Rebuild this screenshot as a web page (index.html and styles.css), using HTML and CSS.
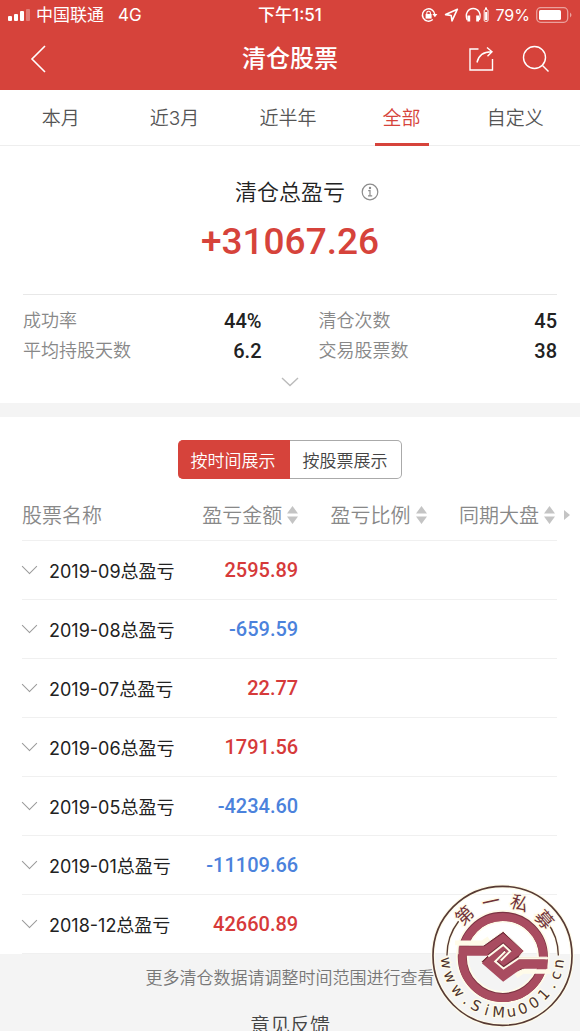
FILE: index.html
```html
<!DOCTYPE html>
<html lang="zh-CN">
<head>
<meta charset="utf-8">
<meta name="viewport" content="width=device-width, initial-scale=1">
<title>清仓股票</title>
<link rel="stylesheet" href="styles.css">
</head>
<body>
<div class="app">
  <header class="top">
    <div class="status">
      <div class="status-side">
        <svg class="signal" width="22" height="12" viewBox="0 0 22 12" fill="#fff"><rect x="0" y="7" width="4" height="5" rx="1"/><rect x="6" y="5" width="4" height="7" rx="1"/><rect x="12" y="2" width="4" height="10" rx="1"/><rect x="18" y="0" width="4" height="12" rx="1" opacity=".3"/></svg>
        <span>中国联通</span><span class="network">4G</span>
      </div>
      <time class="clock">下午1:51</time>
      <div class="status-side status-right">
        <svg width="17" height="16" viewBox="0 0 17 16" fill="none" stroke="#fff" stroke-width="1.4"><path d="M11.8 12.6A6.2 6.2 0 1 1 13.8 7.4"/><path d="M11.4 7h5l-2.5 3.2z" fill="#fff" stroke="none"/><rect x="4.6" y="7" width="6" height="4.6" fill="#fff" stroke="none"/><path d="M5.8 7.4V6a1.8 1.8 0 0 1 3.6 0v1.4" stroke-width="1.1"/></svg>
        <svg width="15" height="16" viewBox="0 0 15 16" fill="none" stroke="#fff" stroke-width="1.6" stroke-linejoin="round"><path d="M13.4 2.2 1.6 7.6l5.6.9.8 5.4z"/></svg>
        <svg width="24" height="16" viewBox="0 0 24 16" fill="none" stroke="#fff" stroke-width="1.4"><path d="M2.2 13C-.4 6.600 3.200 1.500 8.200 1.500S16.800 6.600 14.200 13"/><path d="M3.800 8.500v6M12.600 8.500v6" stroke-width="2.800"/><rect x="19.200" y="2.700" width="3.800" height="11.600" rx="1" stroke-width="1"/><path d="M20 1.500h2M21.100 5v8" stroke-width="2"/></svg>
        <span class="charge">79%</span>
        <svg width="36" height="16" viewBox="0 0 36 16"><rect x=".7" y=".7" width="31" height="14.600" rx="4" fill="none" stroke="#fff" stroke-opacity=".5" stroke-width="1.300"/><rect x="3" y="3" width="22" height="10" rx="1.500" fill="#fff"/><path d="M34 5.500q3 2.500 0 5z" fill="#fff" opacity=".5"/></svg>
      </div>
    </div>
    <div class="nav">
      <button class="icon-button back" aria-label="返回"><svg width="16" height="28" viewBox="0 0 16 28"><path d="M15 1 2 14l13 13" fill="none" stroke="#fff" stroke-width="1.600"/></svg></button>
      <h1>清仓股票</h1>
      <div class="nav-actions">
        <button class="icon-button" aria-label="分享"><svg width="26" height="26" viewBox="0 0 26 26" fill="none" stroke="#fff" stroke-width="1.400"><path d="M10.500 3H2v21h22.500V13M9 16.500C10.500 9.500 15 5.800 23.500 5.800M19 1.500l5 4.300-4.500 4.500"/></svg></button>
        <button class="icon-button" aria-label="搜索"><svg width="28" height="28" viewBox="0 0 28 28" fill="none" stroke="#fff" stroke-width="1.400"><circle cx="12.500" cy="12.500" r="11"/><path d="m20.500 20.500 6 6"/></svg></button>
      </div>
    </div>
  </header>

  <nav class="tabs">
    <button>本月</button><button>近3月</button><button>近半年</button><button class="active">全部</button><button>自定义</button>
  </nav>

  <main>
    <section class="summary">
      <div class="total">
        <h2>清仓总盈亏</h2>
        <button class="icon-button info" aria-label="说明"><svg width="18" height="18" viewBox="0 0 18 18" fill="none" stroke="#8c8c8c" stroke-width="1.200"><circle cx="9" cy="9" r="7.800"/><path d="M7.200 7.600H9v5M7 12.900h4.200"/><circle cx="9" cy="5" r=".6" fill="#8c8c8c"/></svg></button>
        <strong>+31067.26</strong>
      </div>
      <dl class="stats">
        <div><dt>成功率</dt><dd>44%</dd></div>
        <div><dt>清仓次数</dt><dd>45</dd></div>
        <div><dt>平均持股天数</dt><dd>6.2</dd></div>
        <div><dt>交易股票数</dt><dd>38</dd></div>
      </dl>
      <button class="icon-button more" aria-label="展开"><svg width="18" height="10" viewBox="0 0 18 10"><path d="m1 1 8 7.500L17 1" fill="none" stroke="#bbb" stroke-width="1.400"/></svg></button>
    </section>

    <section class="records">
      <div class="switch"><button class="active">按时间展示</button><button>按股票展示</button></div>
      <div class="table-wrap">
        <table>
          <colgroup><col class="col-name"><col class="col-amount"><col class="col-ratio"><col></colgroup>
          <thead>
            <tr>
              <th>股票名称</th>
              <th><button class="sort">盈亏金额<svg width="11" height="18" viewBox="0 0 11 18" fill="#c4c4c4"><path d="M5.500 0 11 7.500H0zM0 10.500h11L5.500 18z"/></svg></button></th>
              <th><button class="sort">盈亏比例<svg width="11" height="18" viewBox="0 0 11 18" fill="#c4c4c4"><path d="M5.500 0 11 7.500H0zM0 10.500h11L5.500 18z"/></svg></button></th>
              <th><button class="sort">同期大盘<svg width="11" height="18" viewBox="0 0 11 18" fill="#c4c4c4"><path d="M5.500 0 11 7.500H0zM0 10.500h11L5.500 18z"/></svg></button></th>
            </tr>
          </thead>
          <tbody>
            <tr><td><button class="month">2019-09总盈亏</button></td><td class="gain">2595.89</td><td></td><td></td></tr>
            <tr><td><button class="month">2019-08总盈亏</button></td><td class="loss">-659.59</td><td></td><td></td></tr>
            <tr><td><button class="month">2019-07总盈亏</button></td><td class="gain">22.77</td><td></td><td></td></tr>
            <tr><td><button class="month">2019-06总盈亏</button></td><td class="gain">1791.56</td><td></td><td></td></tr>
            <tr><td><button class="month">2019-05总盈亏</button></td><td class="loss">-4234.60</td><td></td><td></td></tr>
            <tr><td><button class="month">2019-01总盈亏</button></td><td class="loss">-11109.66</td><td></td><td></td></tr>
            <tr><td><button class="month">2018-12总盈亏</button></td><td class="gain">42660.89</td><td></td><td></td></tr>
          </tbody>
        </table>
        <svg class="scroll-hint" width="6" height="10" viewBox="0 0 6 10"><path d="M0 0l6 5-6 5z" fill="#c4c4c4"/></svg>
      </div>
    </section>

    <footer>
      <p>更多清仓数据请调整时间范围进行查看</p>
      <button class="feedback">意见反馈</button>
    </footer>
  </main>

  <svg class="seal" viewBox="20 10 430 430" role="img" aria-label="第一私募 www.SiMu001.cn">
    <circle class="halo" cx="235" cy="226" r="209"/>
    <circle class="rim" cx="235" cy="226" r="209"/>
    <path class="arc-halo" d="M68 225A168 168 0 0 1 103 122M403 225A168 168 0 0 0 367 122"/>
    <path class="arc" d="M68 225A168 168 0 0 1 103 122M403 225A168 168 0 0 0 367 122"/>
    <circle class="ring-halo" cx="236" cy="229" r="122"/>
    <circle class="ring-shade" cx="236" cy="229" r="122"/>
    <circle class="ring" cx="236" cy="231" r="122"/>
    <path class="gap" d="M92 187H174L194 174M380 273H296L276 287"/>
    <path class="shade" d="M104 194H178L237 152L299 211L284 230H370V236L237 292L170 244L194 221H104z"/>
    <path class="body" d="M104 197H181L237 158L298 212L270 236H370V265H291L237 304L173 248L196 226H104z"/>
    <path class="hook-shade" d="M192 224 237 189 260 210 232 238M284 228 238 260 215 241 243 210"/>
    <path class="hook" d="M192 228 237 193 258 212 230 240M370 233H284L238 264 213 243 243 213"/>
    <g class="cn">
      <text transform="rotate(-43 235 226)" x="235" y="79">第</text>
      <text transform="rotate(-12 235 226)" x="235" y="79">一</text>
      <text transform="rotate(18 235 226)" x="235" y="79">私</text>
      <text transform="rotate(49 235 226)" x="235" y="79">募</text>
    </g>
    <g class="url">
      <text transform="rotate(83 235 226)" x="235" y="411">w</text>
      <text transform="rotate(68 235 226)" x="235" y="411">w</text>
      <text transform="rotate(52 235 226)" x="235" y="411">w</text>
      <text transform="rotate(39 235 226)" x="235" y="411">.</text>
      <text transform="rotate(28 235 226)" x="235" y="411">S</text>
      <text transform="rotate(16 235 226)" x="235" y="411">i</text>
      <text transform="rotate(4 235 226)" x="235" y="411">M</text>
      <text transform="rotate(-9 235 226)" x="235" y="411">u</text>
      <text transform="rotate(-21 235 226)" x="235" y="411">0</text>
      <text transform="rotate(-34 235 226)" x="235" y="411">0</text>
      <text transform="rotate(-47 235 226)" x="235" y="411">1</text>
      <text transform="rotate(-59 235 226)" x="235" y="411">.</text>
      <text transform="rotate(-70 235 226)" x="235" y="411">c</text>
      <text transform="rotate(-82 235 226)" x="235" y="411">n</text>
    </g>
  </svg>
</div>
</body>
</html>
```

FILE: styles.css
```css
* { box-sizing: border-box; }
body { margin: 0; background: #f4f4f4; color: #222; font-family: Inter, "Noto Sans CJK SC", sans-serif; font-weight: 350; }
button { padding: 0; border: 0; background: none; color: inherit; font: inherit; white-space: nowrap; cursor: pointer; }
h1, h2, p, dl, dd { margin: 0; }
svg { display: block; flex: none; }

.app { position: relative; display: flex; flex-direction: column; height: 100vh; overflow: hidden; }
.top { flex: none; background: #d6433b; color: #fff; }

.status { display: flex; align-items: center; height: 30px; padding: 0 8px; font-size: 17px; font-weight: 400; line-height: 30px; }
.status-side { display: flex; flex: 1; align-items: center; gap: 6px; }
.status-right { justify-content: flex-end; }
.network { margin-left: 8px; }
.charge { font-size: 16px; }
.clock { font-weight: 500; }

.nav { display: grid; grid-template-columns: 1fr auto 1fr; align-items: center; height: 60px; padding: 0 30px 2px; }
.nav h1 { font-size: 24px; font-weight: 500; line-height: 36px; }
.back { justify-self: start; }
.nav-actions { display: flex; justify-content: flex-end; gap: 28px; align-items: center; }

.tabs { display: grid; flex: none; grid-template-columns: repeat(5, 1fr); height: 56px; padding: 0 8px 0 4px; border-bottom: 1px solid #eee; background: #fff; color: #555; font-size: 19px; }
.tabs button { justify-self: center; min-width: 54px; height: 56px; border-bottom: 3px solid transparent; }
.tabs .active { border-color: #d6433b; color: #d6433b; }

main { flex: 1; min-height: 0; overflow-y: auto; scrollbar-width: none; }

.summary { padding: 28px 23px 0; background: #fff; }
.total { display: grid; grid-template-columns: 1fr auto 1fr; align-items: center; padding-bottom: 24px; border-bottom: 1px solid #e8e8e8; }
.total h2 { grid-column: 2; font-size: 22px; font-weight: 350; line-height: 36px; }
.info { margin-left: 16px; justify-self: start; }
.total strong { grid-column: 1 / -1; margin-top: 4px; color: #d6433b; font-family: Roboto, sans-serif; font-size: 37px; font-weight: 500; line-height: 56px; text-align: center; }
.stats { display: grid; grid-template-columns: 1fr 1fr; column-gap: 57px; padding-top: 11px; }
.stats div { display: flex; justify-content: space-between; line-height: 30px; }
.stats dt { color: #888; font-size: 18px; }
.stats dd { font-family: Roboto, sans-serif; font-size: 20px; font-weight: 500; }
.more { display: block; margin: 0 auto; padding: 11px 8px 16px; }

.records { margin-top: 14px; padding: 23px 23px 0 22px; background: #fff; }
.switch { display: flex; justify-content: center; }
.switch button { width: 112px; height: 39px; border: 1px solid #aaa; border-left: 0; border-radius: 0 5px 5px 0; color: #444; font-size: 17px; }
.switch .active { border-color: #d6433b; border-radius: 5px 0 0 5px; background: #d6433b; color: #fff; }

.table-wrap { position: relative; margin-top: 11px; }
table { width: 100%; border-collapse: collapse; table-layout: fixed; white-space: nowrap; }
.col-name { width: 30%; }
.col-amount { width: 22%; }
.col-ratio { width: 24%; }
th, td { height: 59px; padding: 0 2px 0 0; border-bottom: 1px solid #f0f0f0; text-align: right; }
th { height: 50px; color: #888; font-size: 20px; font-weight: 350; }
th:first-child, td:first-child { padding: 0; text-align: left; }
.sort { display: inline-flex; align-items: center; gap: 5px; }
.month { display: flex; align-items: center; gap: 12px; font-size: 18px; font-weight: 400; }
.month::before { content: ""; width: 10px; height: 10px; margin: -6px 2px 0; border: solid #999; border-width: 0 1px 1px 0; transform: rotate(45deg); }
.gain, .loss { font-family: Roboto, sans-serif; font-size: 20px; font-weight: 500; }
.gain { color: #d63a3a; }
.loss { color: #4b82dc; }
.scroll-hint { position: absolute; top: 20px; right: -13px; }

footer { display: flex; flex-direction: column; align-items: center; padding-top: 9px; color: #777; font-size: 17px; line-height: 30px; }
.feedback { margin-top: 15px; color: #444; font-size: 20px; line-height: 36px; }

.seal { position: absolute; right: 6px; bottom: 4px; width: 143px; height: 143px; }
.seal circle, .seal path { fill: none; }
.halo { stroke: #fffbe9; stroke-width: 12; }
.rim { stroke: #573a34; stroke-width: 5; }
.arc-halo { stroke: #fffbe9; stroke-width: 10; }
.arc { stroke: #573a34; stroke-width: 4; }
.ring-halo { stroke: #fffbe9; stroke-width: 38; }
.ring-shade { stroke: #7b3443; stroke-width: 27; }
.ring { stroke: #a94c60; stroke-width: 24; }
.gap { stroke: #fffbe9; stroke-width: 14; }
.seal .shade { fill: #722f3d; stroke: #fffbe9; stroke-width: 3; }
.seal .body { fill: #a94c60; }
.hook-shade { stroke: #722f3d; stroke-width: 6; }
.hook { stroke: #fffbe9; stroke-width: 6; }
.seal text { text-anchor: middle; font-weight: 400; paint-order: stroke; stroke: #fffbe9; stroke-width: 8px; }
.cn { fill: #703239; font-family: "Noto Sans CJK SC", sans-serif; font-size: 54px; }
.url { fill: #4c332e; font-family: "DejaVu Sans", sans-serif; font-size: 44px; }
```
